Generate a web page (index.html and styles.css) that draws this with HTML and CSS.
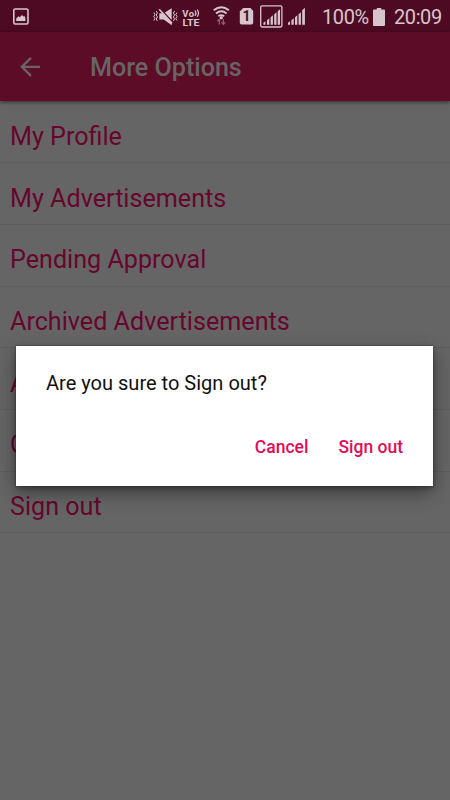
FILE: index.html
```html
<!DOCTYPE html>
<html lang="en">
<head>
<meta charset="utf-8">
<title>More Options</title>
<link rel="stylesheet" href="styles.css">
</head>
<body>
<div class="screen">
  <header class="status">
    <svg class="status-icons" width="320" height="32" viewBox="0 0 320 32">
      <g fill="none" stroke="#d6c5cc" stroke-width="1.6">
        <rect x="13.8" y="9" width="14.2" height="15" rx="1.4"/>
        <rect x="260.7" y="5.8" width="21.2" height="21.2" rx="1.4" stroke-width="1.3"/>
        <path d="M213.7 10.3Q221.3 4.2 228.9 10.3M216 13.4Q221.3 9.2 226.6 13.4M218.4 16.2Q221.3 14 224.2 16.2" stroke-width="1.9"/>
        <path d="M153.8 12.5l1.2 2-1.2 2 1.2 2-1.2 2M156.2 11l1.2 2-1.2 2 1.2 2-1.2 2 1.2 2M174.6 11l-1.2 2 1.2 2-1.2 2 1.2 2-1.2 2M177 12.5l-1.2 2 1.2 2-1.2 2 1.2 2" stroke-width="1"/>
      </g>
      <g fill="#d6c5cc">
        <path d="M16.2 21v-2.5l2.4-2.3 1.2 1 2.2-2.3 1.4 1.6 1-.6 1 2.2V21z"/>
        <path d="M159.3 13.2h3.8l8.6 9.4v2.6l-8-5.8h-4.4zM164.8 12.4l6.9-4.2v11.7z"/>
        <circle cx="221.3" cy="17.7" r="1.6"/>
        <path d="M243.2 8h7.3l2.7 3v11.7q0 1.8-1.8 1.8h-9.8q-1.8 0-1.8-1.8V11.6z"/>
        <path d="M263.4 24.8v-2l2-1.6v3.6zM267 24.8v-4.6l2.3-1.9v6.5zM270.6 24.8v-7.6l2.3-2v9.6zM274.2 24.8V14.2l2.3-2v12.6zM277.7 24.8V11.2l2.3-2v15.6z"/>
        <path d="M288 24.8v-2l2-1.6v3.6zM291.4 24.8v-4.6l2.3-1.9v6.5zM295 24.8v-7.6l2.3-2v9.6zM298.6 24.8V14.2l2.3-2v12.6zM302.2 24.8V10.2l2.7-2.4v17z"/>
      </g>
      <path d="M159.2 9.2l12.8 14" stroke="#d6c5cc" stroke-width="1.6"/>
      <path d="M219.3 24.5v-5M217.4 21.3l1.9-2 1.1 1.5M223.4 19.3v5M221.5 22.4l1.9 2 1.9-2" fill="none" stroke="#89616f" stroke-width="1.3"/>
      <text class="sim" x="242.6" y="21">1</text>
      <text class="volte" x="182.2" y="16.5" textLength="12">Vo</text>
      <path d="M195 10.5q2 2.7 0 5.3M197.3 9.6q2.5 3.5 0 7" fill="none" stroke="#d6c5cc" stroke-width="1.2"/>
      <text class="volte" x="182.4" y="26" textLength="17" lengthAdjust="spacingAndGlyphs">LTE</text>
    </svg>
    <span class="percent">100%</span>
    <svg class="battery" width="12" height="18" viewBox="0 0 12 18"><path d="M0 2.5Q0 1.5 1 1.5H3.8V0h4.4v1.5H11q1 0 1 1V17q0 1-1 1H1q-1 0-1-1z" fill="#d6c5cc"/></svg>
    <span class="clock">20:09</span>
  </header>
  <nav class="toolbar">
    <svg width="20" height="20" viewBox="0 0 20 20"><path d="M20 9.8H1.7M11 .9L1.8 9.8 11 18.9" fill="none" stroke="#686466" stroke-width="2.3"/></svg>
    <h1>More Options</h1>
  </nav>
  <ul class="options">
    <li>My Profile</li>
    <li>My Advertisements</li>
    <li>Pending Approval</li>
    <li>Archived Advertisements</li>
    <li>A</li>
    <li>C</li>
    <li>Sign out</li>
  </ul>
  <section class="dialog" role="dialog">
    <p>Are you sure to Sign out?</p>
    <div class="actions"><button>Cancel</button><button>Sign out</button></div>
  </section>
</div>
</body>
</html>
```
FILE: styles.css
```css
* { box-sizing: border-box; }
body { margin: 0; font-family: Roboto, sans-serif; }
.screen { position: relative; width: 450px; height: 800px; overflow: hidden; background: #656565; }
.status { display: flex; height: 32px; background: #4f0a23; color: #d6c5cc; font-size: 20px; line-height: 35px; }
.status-icons { flex: none; }
.percent { width: 53px; padding-left: 2px; letter-spacing: -0.4px; }
.battery { flex: none; margin-top: 7.5px; }
.clock { margin-left: 9px; letter-spacing: -0.4px; }
.sim { font: 700 14px Roboto, sans-serif; fill: #4f0a23; }
.volte { font: 700 9.5px Roboto, sans-serif; fill: #d6c5cc; }
.toolbar { position: relative; display: flex; align-items: center; height: 69px; padding: 1px 0 0 20px; background: #5d0c27; box-shadow: 0 1px 4px rgba(0, 0, 0, .6); }
.toolbar h1 { margin: 0 0 0 50px; font-size: 25.1px; font-weight: 500; color: #686466; }
.options { margin: 0; padding: 0.8px 0 0; list-style: none; }
.options li { height: 61.65px; padding: 19.2px 10px 0; border-bottom: 1px solid #5d5d5d; color: #67062d; font-size: 25.15px; line-height: 31px; }
.dialog { position: absolute; left: 16px; top: 346px; width: 417px; height: 140px; padding: 25px 30px; background: #fff; box-shadow: 0 0 1px #222, 0 7px 18px rgba(0, 0, 0, .38), 0 2px 5px rgba(0, 0, 0, .3); }
.dialog p { margin: 0; font-size: 20.05px; line-height: 25px; color: #111; }
.actions { display: flex; justify-content: flex-end; gap: 30px; margin-top: 39px; }
.actions button { padding: 0; border: 0; background: none; color: #e40b58; font: 500 17.5px/24px Roboto, sans-serif; }
```
